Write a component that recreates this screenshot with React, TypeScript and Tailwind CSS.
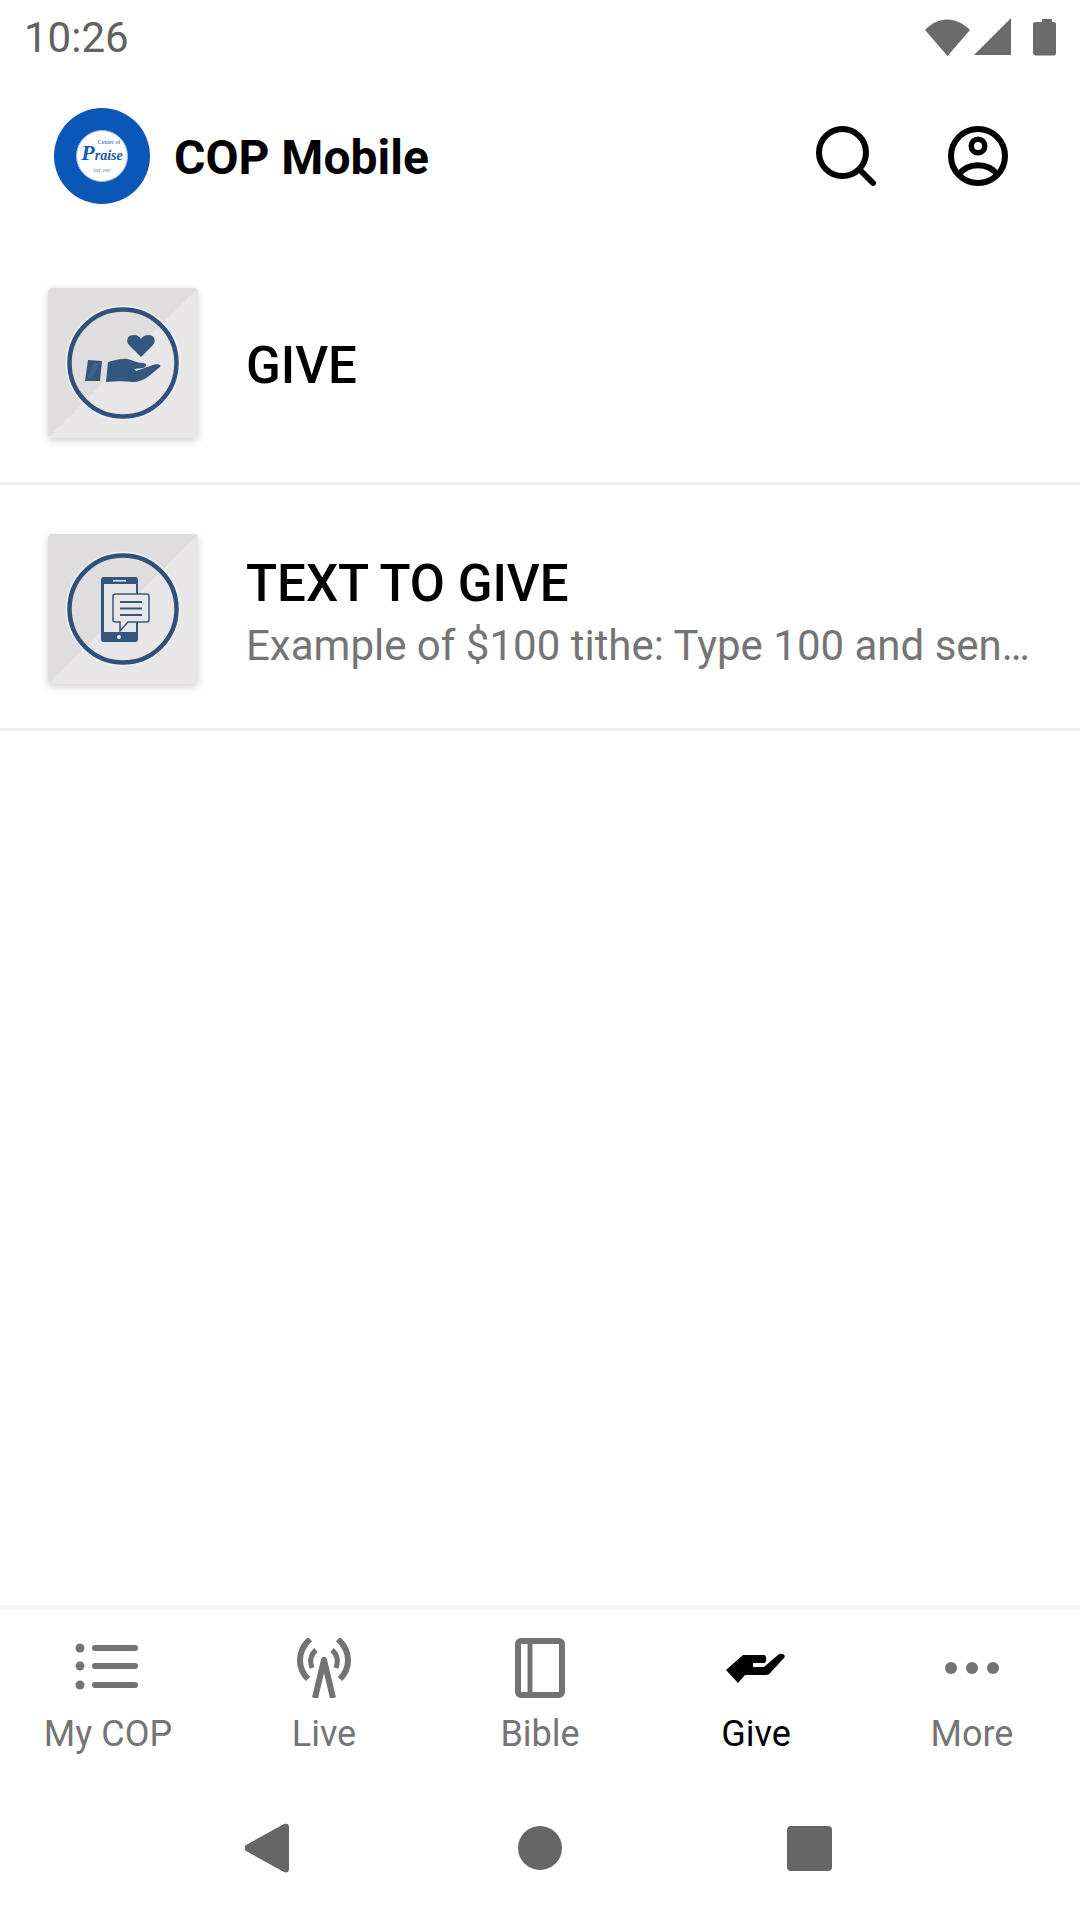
const tabs = [
  { label: 'My COP', icon: <ListIcon /> },
  { label: 'Live', icon: <LiveIcon /> },
  { label: 'Bible', icon: <BibleIcon /> },
  { label: 'Give', icon: <GiveIcon />, active: true },
  { label: 'More', icon: <MoreIcon /> },
];

function ListIcon() {
  return (
    <svg width="66" height="60" viewBox="0 0 66 60" fill="#737376">
      <circle cx="5" cy="10" r="4.500" />
      <circle cx="5" cy="28" r="4.500" />
      <circle cx="5" cy="47" r="4.500" />
      <rect x="17" y="7" width="46" height="6" rx="3" />
      <rect x="17" y="25" width="46" height="6" rx="3" />
      <rect x="17" y="44" width="46" height="6" rx="3" />
    </svg>
  );
}

function LiveIcon() {
  return (
    <svg width="54" height="60" viewBox="0 0 54 60" fill="none" stroke="#737376">
      <path d="M13 1C0 13 0 30 11 41" strokeWidth="6" />
      <path d="M41 1C54 13 54 30 43 41" strokeWidth="6" />
      <path d="M19 12C13 17 13 24 15 30" strokeWidth="5" />
      <path d="M35 12C41 17 41 24 39 30" strokeWidth="5" />
      <path d="M18 60L27 22L36 60" strokeWidth="6" strokeLinejoin="round" />
    </svg>
  );
}

function BibleIcon() {
  return (
    <svg width="50" height="60" viewBox="0 0 50 60" fill="none" stroke="#737376" strokeWidth="6">
      <rect x="3" y="3" width="44" height="54" rx="3" />
      <path d="M15 3V57" strokeWidth="5" />
    </svg>
  );
}

function GiveIcon() {
  return (
    <svg width="60" height="60" viewBox="0 0 60 60" fill="#000">
      <path d="M0 32L17 17H38C41 17 41 25 38 25H27V29H38L52 17C55 14 61 17 58 20L45 34C44 36 42 37 40 37H19L12 45Z" />
    </svg>
  );
}

function MoreIcon() {
  return (
    <svg width="60" height="60" viewBox="0 0 60 60" fill="#737376">
      <circle cx="9" cy="30" r="6" />
      <circle cx="30" cy="30" r="6" />
      <circle cx="51" cy="30" r="6" />
    </svg>
  );
}

function GiveArt() {
  return (
    <svg width="150" height="150" viewBox="0 0 150 150" fill="#33567f">
      <circle cx="75" cy="75" r="56" fill="none" stroke="#edf0f3" strokeWidth="3" />
      <circle cx="75" cy="75" r="53.500" fill="none" stroke="#30527a" strokeWidth="4.500" />
      <path d="M93 69L81 57C77 52 80 47 86 47C89 47 92 49 93 51C94 49 97 47 100 47C106 47 109 52 105 57Z" />
      <path d="M40 72L54 73L52 93L37 93Z" />
      <path d="M46 75L52 75L44 90L39 90Z" fill="#3f628c" />
      <path d="M60 74C66 73 72 70 79 71C85 72 89 75 95 75C99 75 99 79 95 80L86 81L88 83L102 78C108 75 114 76 112 79L101 88C96 92 90 94 85 94C76 93 67 93 58 94Z" />
    </svg>
  );
}

function TextArt() {
  return (
    <svg width="150" height="150" viewBox="0 0 150 150" fill="none">
      <circle cx="75" cy="75" r="56" stroke="#edf0f3" strokeWidth="3" />
      <circle cx="75" cy="75" r="53.500" stroke="#30527a" strokeWidth="4.500" />
      <rect x="53" y="43" width="37" height="65" rx="3" fill="#33567f" />
      <rect x="56" y="50" width="32" height="48" fill="#e8e6e7" />
      <rect x="65" y="46" width="13" height="1.500" fill="#e8e6e7" />
      <circle cx="71" cy="103" r="2" fill="#e8e6e7" />
      <path d="M68 60H99C100 60 101 61 101 62V86C101 87 100 88 99 88H80L72 97V88H68C66 88 65 87 65 86V62C65 61 66 60 68 60Z" fill="#e8e6e7" stroke="#33567f" strokeWidth="1.500" />
      <path d="M72 68H94M72 74.500H94M72 81H94" stroke="#33567f" strokeWidth="2" />
    </svg>
  );
}

function Logo() {
  return (
    <div className="w-[96px] h-[96px] rounded-full bg-[#0b57b7] flex items-center justify-center">
      <div className="w-[52px] h-[52px] rounded-full bg-white border border-[#9cc0ea] flex flex-col items-center justify-center text-[#1459b3] font-['Liberation_Serif',serif] italic">
        <span className="text-[6px] leading-[7px] pl-[14px] not-italic">Center of</span>
        <span className="text-[14px] leading-[14px] font-bold">
          <span className="text-[22px] leading-[14px]">P</span>raise
        </span>
        <span className="mt-[5px] text-[4px] leading-[5px] not-italic">EST. 1987</span>
      </div>
    </div>
  );
}

function Row({ art, title, subtitle }: { art: React.ReactNode; title: string; subtitle?: string }) {
  return (
    <div className="h-[246px] pt-[5px] pl-[48px] pr-[48px] flex items-center border-b-[3px] border-[#eeeeee]">
      <div className="w-[150px] h-[150px] shrink-0 rounded-[4px] bg-[linear-gradient(135deg,#dfdddd_50%,#e8e6e7_50%)] shadow-[0_3px_8px_rgba(0,0,0,0.18)]">
        {art}
      </div>
      <div className={`ml-[48px] min-w-0 flex-1 ${subtitle ? 'pt-[13px]' : 'pt-[6px]'}`}>
        <div className="text-[51px] leading-[60px] font-medium text-black">{title}</div>
        {subtitle && <div className="text-[42px] leading-[64px] text-[#757575] truncate">{subtitle}</div>}
      </div>
    </div>
  );
}

export default function App() {
  return (
    <div className="w-[1080px] h-[1920px] bg-white flex flex-col font-['Roboto',sans-serif] overflow-hidden">
      <div className="h-[72px] pt-[2px] pl-[24px] pr-[24px] flex items-center justify-between">
        <span className="text-[42px] text-[#616161]">10:26</span>
        <div className="flex items-center">
          <svg width="132" height="40" viewBox="0 0 132 40" fill="#6b6b6b">
            <path d="M1 13C14 -1 32 -1 46 13L23.500 39Z" />
            <path d="M50 38L87 1V38Z" />
            <path d="M118 3C118 2.500 118.500 2 119 2H127C127.500 2 128 2.500 128 3V5H130C131.500 5 132 6 132 7V36C132 37.500 131 38.500 130 38.500H112C110.500 38.500 109 37.500 109 36V7C109 6 110 5 111 5H118Z" />
          </svg>
        </div>
      </div>

      <div className="h-[167px] pl-[54px] pr-[72px] flex items-center">
        <Logo />
        <span className="ml-[24px] pt-[4px] text-[48px] font-bold text-black flex-1">COP Mobile</span>
        <svg width="60" height="60" viewBox="0 0 60 60" fill="none" stroke="#000" strokeWidth="6" strokeLinecap="round">
          <circle cx="26.500" cy="26.500" r="23.500" />
          <path d="M44 44L57 57" />
        </svg>
        <svg className="ml-[72px]" width="60" height="60" viewBox="0 0 60 60" fill="none" stroke="#000" strokeWidth="6">
          <circle cx="30" cy="30" r="27" />
          <circle cx="30" cy="20" r="6.750" strokeWidth="5.500" />
          <path d="M10 49C20 36 40 36 50 49" />
        </svg>
      </div>

      <Row art={<GiveArt />} title="GIVE" />
      <Row art={<TextArt />} title="TEXT TO GIVE" subtitle="Example of $100 tithe: Type 100 and send to 77977" />

      <div className="flex-1" />

      <div className="border-t-[5px] border-[#f6f6f6] pt-[28px] pb-[20px] grid grid-cols-5">
        {tabs.map((tab) => (
          <div key={tab.label} className="flex flex-col items-center">
            <div className="h-[60px] flex items-center">{tab.icon}</div>
            <span className={`mt-[14px] text-[36px] leading-[44px] ${tab.active ? 'text-black' : 'text-[#757575]'}`}>{tab.label}</span>
          </div>
        ))}
      </div>

      <div className="h-[144px] shrink-0 flex items-center">
        <div className="ml-[245px] w-[44px] h-[50px]">
          <svg width="44" height="50" viewBox="0 0 44 50" fill="#666">
            <path d="M1 22L39 1C42 0 44 1 44 4V46C44 49 42 50 39 49L1 28C-1 27 -1 23 1 22Z" />
          </svg>
        </div>
        <div className="ml-[229px] w-[44px] h-[44px] rounded-full bg-[#666]" />
        <div className="ml-[225px] w-[45px] h-[45px] rounded-[4px] bg-[#666]" />
      </div>
    </div>
  );
}
